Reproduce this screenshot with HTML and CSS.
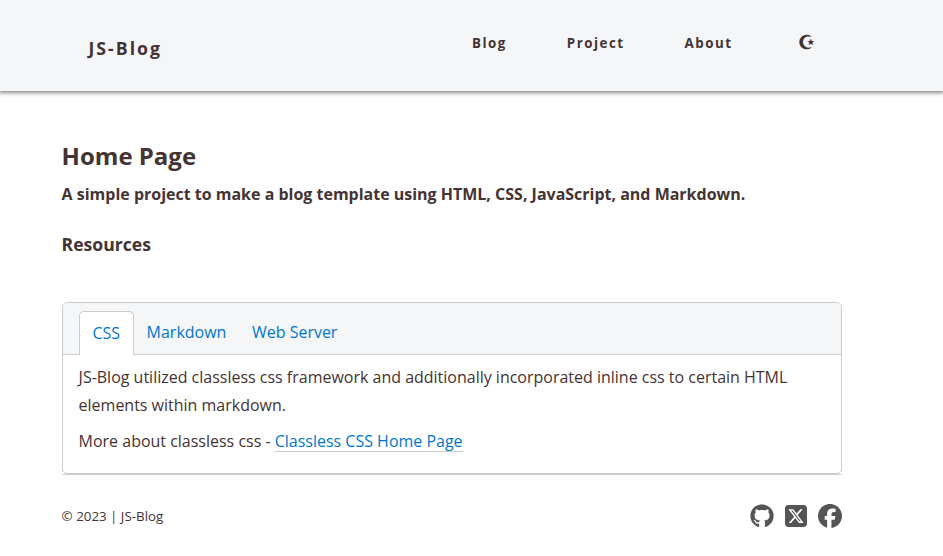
FILE: index.html
```html
<!DOCTYPE html>
<html lang="en">
<head>
<meta charset="utf-8">
<title>JS-Blog</title>
<link rel="stylesheet" href="styles.css">
</head>
<body>
<header class="site-header">
  <a class="brand" href="#">JS-Blog</a>
  <nav class="site-nav">
    <a class="nav-blog" href="#">Blog</a>
    <a class="nav-project" href="#">Project</a>
    <a class="nav-about" href="#">About</a>
    <a class="nav-theme" href="#">☪</a>
  </nav>
</header>
<main class="content">
  <h1>Home Page</h1>
  <p class="lead">A simple project to make a blog template using HTML, CSS, JavaScript, and Markdown.</p>
  <h2>Resources</h2>
  <section class="card">
    <div class="tabs">
      <a class="tab active" href="#">CSS</a>
      <a class="tab" href="#">Markdown</a>
      <a class="tab" href="#">Web Server</a>
    </div>
    <div class="panel">
      <p>JS-Blog utilized classless css framework and additionally incorporated inline css to certain HTML elements within markdown.</p>
      <p>More about classless css - <a class="link" href="#">Classless CSS Home Page</a></p>
    </div>
  </section>
</main>
<footer class="site-footer">
  <span>© 2023 | JS-Blog</span>
  <div class="social">
    <svg class="github" viewBox="0 0 496 512"><path d="M165.9 397.4c0 2-2.3 3.600-5.200 3.600-3.300.3-5.600-1.300-5.600-3.600 0-2 2.300-3.600 5.200-3.600 3-.3 5.600 1.300 5.600 3.600zM244.800 8C106.100 8 0 113.300 0 252c0 110.900 69.800 205.800 169.500 239.200 12.800 2.300 17.300-5.600 17.300-12.100 0-6.200-.3-40.400-.3-61.400 0 0-70 15-84.700-29.800 0 0-11.400-29.100-27.800-36.600 0 0-22.900-15.700 1.600-15.400 0 0 24.900 2 38.600 25.800 21.900 38.600 58.600 27.500 72.900 20.900 2.300-16 8.800-27.100 16-33.700-55.900-6.200-112.300-14.300-112.300-110.500 0-27.500 7.600-41.300 23.600-58.900-2.600-6.500-11.100-33.300 2.600-67.900 20.900-6.500 69 27 69 27 20-5.600 41.500-8.500 62.800-8.500s42.800 2.900 62.800 8.500c0 0 48.100-33.600 69-27 13.700 34.700 5.200 61.400 2.600 67.900 16 17.700 25.800 31.500 25.800 58.900 0 96.500-58.900 104.200-114.800 110.500 9.200 7.900 17 22.900 17 46.400 0 33.700-.3 75.400-.3 83.600 0 6.500 4.600 14.400 17.300 12.100C428.200 457.800 496 362.900 496 252 496 113.300 383.500 8 244.800 8z"/></svg>
    <svg class="x" viewBox="0 32 448 448"><path d="M64 32C28.700 32 0 60.700 0 96V416c0 35.300 28.700 64 64 64H384c35.300 0 64-28.700 64-64V96c0-35.300-28.700-64-64-64H64zm297.100 84L257.300 234.600 379.400 396H283.800L209 298.100 123.300 396H75.800l111-126.900L69.700 116h98l67.700 89.500L313.600 116h47.500zM323.300 367.600L153.400 142.900H125.100L296.900 367.600h26.300z"/></svg>
    <svg class="facebook" viewBox="0 0 512 512"><path d="M512 256C512 114.600 397.400 0 256 0S0 114.600 0 256c0 120 82.700 220.800 194.200 248.500V334.200h-52.800V256h52.800v-33.700c0-87.100 39.400-127.500 125-127.500 16.200 0 44.200 3.200 55.700 6.400V172c-6-.6-16.500-1-29.600-1-42 0-58.200 15.900-58.200 57.200V256h83.600l-14.400 78.200h-69.300v175.900C413.800 494.800 512 386.900 512 256z"/></svg>
  </div>
</footer>
</body>
</html>
```
FILE: styles.css
```css
* { box-sizing: border-box; }

body {
  margin: 0;
  height: 556px;
  overflow: hidden;
  background: #fff;
  color: #433;
  font: 15.99px/28px "Open Sans", sans-serif;
}

a { color: #07c; text-decoration: none; }
h1, h2, p { margin: 0; }

.site-header {
  display: flex;
  align-items: flex-start;
  height: 91px;
  padding-left: 88.5px;
  background: #f4f6f8;
  box-shadow: 0 1px 4px 1px #888a88;
}

.site-header a { color: #433; font-weight: 700; }

.brand {
  width: 383.5px;
  padding-top: 34px;
  font-size: 17.7px;
  letter-spacing: 2px;
}

.site-nav {
  display: flex;
  gap: 60px;
  padding-top: 29px;
  font-size: 13.33px;
  letter-spacing: 1.5px;
}

.nav-theme { margin-left: 5px; font-size: 18.5px; line-height: 26px; }

.content, .site-footer { width: 780px; margin-left: 61.6px; }

h1 { padding-top: 48px; font-size: 24px; line-height: 33px; }
.lead { margin-top: 8px; font-weight: 700; }
h2 { margin-top: 22px; font-size: 17.6px; line-height: 28px; }

.card {
  height: 172px;
  margin-top: 44px;
  border: 1px solid #ccc;
  border-radius: 5px;
}

.tabs {
  display: flex;
  align-items: flex-end;
  height: 52px;
  padding-left: 16px;
  background: #f4f6f8;
  border-bottom: 1px solid #ccc;
  border-radius: 4px 4px 0 0;
}

.tab { height: 44px; padding: 8px 12.8px 0; }

.tab.active {
  height: 44px;
  padding-top: 7px;
  margin-bottom: -1px;
  background: #fff;
  border: 1px solid #ccc;
  border-bottom: 0;
  border-radius: 5px 5px 0 0;
}

.panel { padding: 8px 16px; }
.panel p + p { margin-top: 8px; }
.link { display: inline-block; height: 25px; border-bottom: 1px solid #ccc; }

.site-footer {
  display: flex;
  align-items: center;
  justify-content: space-between;
  height: 82px;
  border-top: 1px solid #ccc;
  font-size: 13.33px;
}

.social { display: flex; align-items: center; gap: 11px; }
.social svg { display: block; width: 24px; height: 24px; fill: #555; }
.social .x { width: 22px; height: 22px; }
```
